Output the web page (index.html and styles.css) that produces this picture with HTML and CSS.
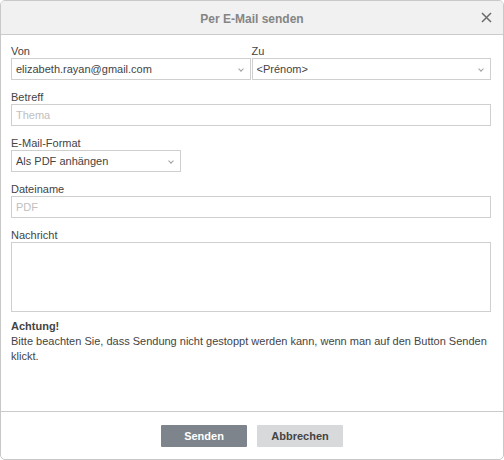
FILE: index.html
```html
<!DOCTYPE html>
<html lang="de">
<head>
<meta charset="utf-8">
<title>Per E-Mail senden</title>
<link rel="stylesheet" href="styles.css">
</head>
<body>
<div class="dialog">
  <div class="header">
    <span class="title">Per E-Mail senden</span>
    <span class="close"><svg width="11" height="11" viewBox="0 0 11 11"><path d="M1 1L10 10M10 1L1 10" stroke="#6b6b6b" stroke-width="1.5" fill="none"/></svg></span>
  </div>
  <div class="body">
    <div class="row two">
      <div class="field">
        <div class="label">Von</div>
        <div class="control select"><span>elizabeth.rayan@gmail.com</span><i class="chev"></i></div>
      </div>
      <div class="field">
        <div class="label">Zu</div>
        <div class="control select"><span>&lt;Prénom&gt;</span><i class="chev"></i></div>
      </div>
    </div>
    <div class="row">
      <div class="label">Betreff</div>
      <div class="control"><span class="ph">Thema</span></div>
    </div>
    <div class="row">
      <div class="label">E-Mail-Format</div>
      <div class="control select narrow"><span>Als PDF anhängen</span><i class="chev"></i></div>
    </div>
    <div class="row">
      <div class="label">Dateiname</div>
      <div class="control"><span class="ph">PDF</span></div>
    </div>
    <div class="row">
      <div class="label">Nachricht</div>
      <div class="control area"></div>
    </div>
    <div class="note">
      <div class="note-title">Achtung!</div>
      <div>Bitte beachten Sie, dass Sendung nicht gestoppt werden kann, wenn man auf den Button Senden klickt.</div>
    </div>
  </div>
  <div class="footer">
    <button class="btn primary">Senden</button>
    <button class="btn secondary">Abbrechen</button>
  </div>
</div>
</body>
</html>
```

FILE: styles.css
```css
html, body {
  margin: 0;
  padding: 0;
  background: #fff;
}
body {
  font-family: "Liberation Sans", Arial, sans-serif;
  font-size: 11px;
  color: #444;
}
.dialog {
  width: 504px;
  height: 460px;
  box-sizing: border-box;
  border: 1px solid #c8c8c8;
  border-radius: 5px;
  display: flex;
  flex-direction: column;
  overflow: hidden;
}
.header {
  height: 33px;
  background: #f1f1f1;
  border-bottom: 1px solid #cbcbcb;
  display: flex;
  align-items: center;
  justify-content: center;
  position: relative;
}
.title {
  font-size: 12px;
  font-weight: bold;
  color: #858585;
  margin-top: 2px;
}
.close {
  position: absolute;
  right: 11px;
  top: 11px;
  width: 11px;
  height: 11px;
  display: flex;
}
.body {
  flex: 1;
  padding: 9px 12px 0 10px;
  display: flex;
  flex-direction: column;
}
.row {
  margin-bottom: 10px;
}
.row.two {
  display: grid;
  grid-template-columns: 1fr 1fr;
  column-gap: 1px;
}
.label {
  line-height: 14px;
  height: 14px;
}
.control {
  height: 22px;
  box-sizing: border-box;
  border: 1px solid #cfcfcf;
  display: flex;
  align-items: center;
  padding: 0 4px;
  line-height: 14px;
  color: #444;
  position: relative;
}
.select span {
  flex: 1;
  white-space: nowrap;
  overflow: hidden;
}
.narrow {
  width: 170px;
}
.ph {
  color: #c0c0c0;
}
.chev {
  width: 3px;
  height: 3px;
  border-right: 1px solid #a0a0a0;
  border-bottom: 1px solid #a0a0a0;
  transform: rotate(45deg);
  margin: -1px 3px 0 0;
}
.area {
  height: 70px;
}
.note {
  margin-top: -3px;
  line-height: 15px;
}
.note-title {
  font-weight: bold;
}
.footer {
  height: 48px;
  border-top: 1px solid #cbcbcb;
  display: flex;
  justify-content: center;
  align-items: flex-start;
  padding-top: 13px;
  box-sizing: border-box;
  gap: 10px;
}
.btn {
  width: 86px;
  height: 22px;
  border: none;
  border-radius: 1px;
  font-family: "Liberation Sans", Arial, sans-serif;
  font-size: 11px;
  font-weight: bold;
  padding: 0;
}
.primary {
  background: #7d848b;
  color: #fff;
}
.secondary {
  background: #d8d9db;
  color: #444;
}
```
